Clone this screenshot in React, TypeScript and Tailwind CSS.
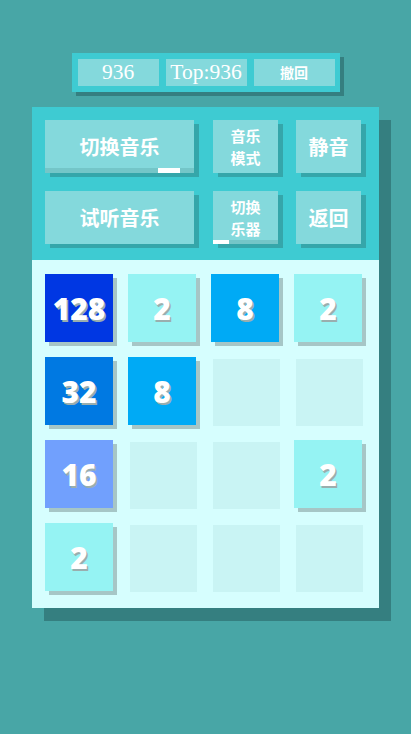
import React from "react";

type Tile = number | null;

const board: Tile[][] = [
  [128, 2, 8, 2],
  [32, 8, null, null],
  [16, null, null, 2],
  [2, null, null, null],
];

const tileColor: Record<number, string> = {
  2: "bg-[#95f3f3]",
  8: "bg-[#00aaf5]",
  16: "bg-[#71a0fd]",
  32: "bg-[#0079e2]",
  128: "bg-[#0037e3]",
};

const cjk = { fontFamily: '"Noto Sans CJK SC", "Noto Sans", sans-serif' };
const serif = { fontFamily: '"Liberation Serif", serif' };

function Btn({
  children,
  wide,
  small,
  bar,
}: {
  children: React.ReactNode;
  wide?: boolean;
  small?: boolean;
  bar?: { left: number; width: number; h: string };
}) {
  return (
    <div
      className={`relative flex items-center justify-center h-[53px] bg-[#84d9dc] shadow-[5px_4px_0_#35a6aa] text-white font-bold ${
        wide ? "w-[149px]" : "w-[65px]"
      } ${small ? "text-[15px] leading-[22px]" : "text-[20px]"}`}
      style={cjk}
    >
      <div className="text-center">{children}</div>
      {bar && (
        <div className={`absolute left-0 right-0 bottom-0 bg-[#74c6c8] ${bar.h}`}>
          <div
            className="absolute top-0 bottom-0 bg-white"
            style={{ left: bar.left, width: bar.width }}
          />
        </div>
      )}
    </div>
  );
}

export default function App() {
  return (
    <div className="w-full min-h-[734px] bg-[#48a6a6] flex flex-col items-center pt-[53px]">
      {/* top score bar */}
      <div className="flex gap-[7px] pt-[6px] pb-[6px] pl-[6px] pr-[5px] bg-[#3ecbd2] shadow-[4px_4px_0_#357f80]">
        <div
          className="w-[81px] h-[27px] bg-[#84d9dc] flex items-center justify-center text-white text-[21.5px]"
          style={serif}
        >
          936
        </div>
        <div
          className="w-[81px] h-[27px] bg-[#84d9dc] flex items-center justify-center text-white text-[21.5px]"
          style={serif}
        >
          Top:936
        </div>
        <div
          className="w-[81px] h-[27px] bg-[#84d9dc] flex items-center justify-center text-white text-[14px] font-bold"
          style={cjk}
        >
          撤回
        </div>
      </div>

      {/* main panel */}
      <div className="mt-[15px] w-[347px] shadow-[12px_13px_0_#357f80]">
        <div className="bg-[#3ecbd2] pt-[13px] pl-[13px] pr-[18px] pb-[16px] flex flex-col gap-[18px]">
          <div className="flex">
            <Btn wide bar={{ left: 113, width: 22, h: "h-[5px]" }}>
              切换音乐
            </Btn>
            <div className="ml-[19px]">
              <Btn small>
                音乐
                <br />
                模式
              </Btn>
            </div>
            <div className="ml-[18px]">
              <Btn>静音</Btn>
            </div>
          </div>
          <div className="flex">
            <Btn wide>试听音乐</Btn>
            <div className="ml-[19px]">
              <Btn small bar={{ left: 0, width: 16, h: "h-[4px]" }}>
                切换
                <br />
                乐器
              </Btn>
            </div>
            <div className="ml-[18px]">
              <Btn>返回</Btn>
            </div>
          </div>
        </div>

        <div className="bg-[#d6fefe] pt-[16px] pb-[16px] pl-[15px] pr-[16px] grid grid-cols-4 gap-[16px]">
          {board.flat().map((v, i) => (
            <div key={i} className="w-[67px] h-[67px] relative">
              {v === null ? (
                <div className="w-full h-full bg-[#c9f4f4]" />
              ) : (
                <div
                  className={`absolute left-[-2px] top-[-2px] w-[68px] h-[68px] flex items-center justify-center text-white text-[30px] font-black shadow-[4px_4px_0_#a6c6c6] ${tileColor[v]}`}
                  style={{
                    fontFamily: '"Noto Sans", sans-serif',
                    textShadow: "1.5px 1.5px 0 #9aaeae",
                  }}
                >
                  {v}
                </div>
              )}
            </div>
          ))}
        </div>
      </div>
    </div>
  );
}
